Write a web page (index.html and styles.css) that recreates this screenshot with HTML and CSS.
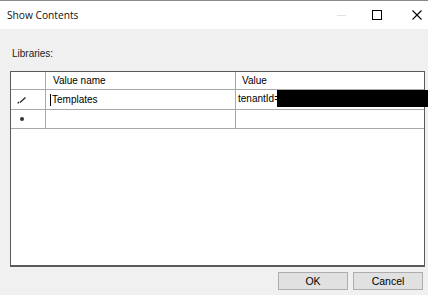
FILE: index.html
```html
<!DOCTYPE html>
<html lang="en">
<head>
  <meta charset="UTF-8" />
  <title>Show Contents</title>
  <link rel="stylesheet" href="styles.css">
</head>
<body>
  <div class="window">
    <div class="titlebar">
      <span class="title">Show Contents</span>
      <div class="controls">
        <span class="ctl min"><span class="dash"></span></span>
        <span class="ctl max">
          <svg width="10" height="10" viewBox="0 0 10 10"><rect x="0.5" y="0.5" width="9" height="9" fill="none" stroke="#000" stroke-width="1"/></svg>
        </span>
        <span class="ctl close">
          <svg width="10" height="10" viewBox="0 0 10 10"><path d="M0.5 0.5 L9.5 9.5 M9.5 0.5 L0.5 9.5" stroke="#000" stroke-width="1.1"/></svg>
        </span>
      </div>
    </div>

    <div class="content">
      <div class="label">Libraries:</div>

      <div class="grid">
        <div class="cell corner"></div>
        <div class="cell head">Value name</div>
        <div class="cell head last">Value</div>

        <div class="cell rowhead">
          <svg width="10" height="8" viewBox="0 0 10 8"><path d="M1 7 L2 6 M3 6.5 L8.5 1.5" stroke="#222" stroke-width="1.2"/><circle cx="1" cy="7" r="0.6" fill="#222"/></svg>
        </div>
        <div class="cell edit"><span class="caret"></span>Templates</div>
        <div class="cell last">tenantId=</div>

        <div class="cell rowhead">
          <span class="star"></span>
        </div>
        <div class="cell"></div>
        <div class="cell last"></div>

        <div class="blank"></div>
      </div>

      <div class="buttons">
        <button class="btn">OK</button>
        <button class="btn">Cancel</button>
      </div>
    </div>

    <div class="redact"></div>
  </div>
</body>
</html>
```

FILE: styles.css
```css
body {
  margin: 0;
  background: #f0f0f0;
  font-family: "Liberation Sans", Arial, sans-serif;
  font-size: 10px;
  color: #000;
}

.window {
  position: relative;
  width: 428px;
  height: 295px;
  overflow: hidden;
}

.titlebar {
  height: 28px;
  background: #fff;
  border-top: 1px solid #8a8a8a;
  display: flex;
  align-items: center;
  justify-content: space-between;
}

.title {
  font-family: "Open Sans", "Noto Sans", sans-serif;
  font-size: 10.2px;
  padding-left: 7px;
  color: #111;
}

.controls {
  display: flex;
  align-items: center;
}

.ctl {
  width: 24px;
  height: 28px;
  display: flex;
  align-items: center;
  justify-content: center;
}

.min {
  margin-right: 12px;
}

.close {
  width: 23px;
  margin-left: 16px;
}

.dash {
  width: 9px;
  height: 1px;
  background: #e2e2e2;
}

.content {
  padding: 18px 0 0 0;
}

.label {
  padding-left: 12px;
  height: 14px;
  line-height: 14px;
  color: #222;
}

.grid {
  margin: 10px 0 0 10px;
  width: 413px;
  height: 193px;
  background: #fff;
  border: 1px solid #5a5a5a;
  border-bottom-width: 2px;
  display: grid;
  grid-template-columns: 35px 190px 1fr;
  grid-template-rows: 18px 20px 19px 1fr;
}

.cell {
  border-right: 1px solid #a8a8a8;
  border-bottom: 1px solid #a8a8a8;
  padding-left: 5px;
  line-height: 18px;
  white-space: nowrap;
  overflow: hidden;
}

.cell.last {
  border-right: none;
  padding-left: 2px;
}

.head {
  padding-left: 7px;
}

.head.last {
  padding-left: 6px;
}

.rowhead {
  padding-left: 0;
  display: flex;
  align-items: center;
  justify-content: center;
}

.edit {
  padding-left: 4px;
  display: flex;
  align-items: center;
}

.caret {
  width: 1px;
  height: 12px;
  background: #000;
  margin-right: 1px;
}

.star {
  width: 4px;
  height: 4px;
  background: #333;
  border-radius: 50%;
  margin-left: -12px;
}

.rowhead svg {
  margin-left: -13px;
}

.blank {
  grid-column: 1 / 4;
}

.buttons {
  display: flex;
  justify-content: flex-end;
  gap: 5px;
  padding: 5px 5px 0 0;
}

.btn {
  width: 70px;
  height: 18px;
  background: #e1e1e1;
  border: 1px solid #adadad;
  font-family: "Liberation Sans", Arial, sans-serif;
  font-size: 10.5px;
  color: #000;
  padding: 0;
}

.redact {
  position: absolute;
  left: 277px;
  top: 90px;
  width: 151px;
  height: 17px;
  background: #000;
}
```
